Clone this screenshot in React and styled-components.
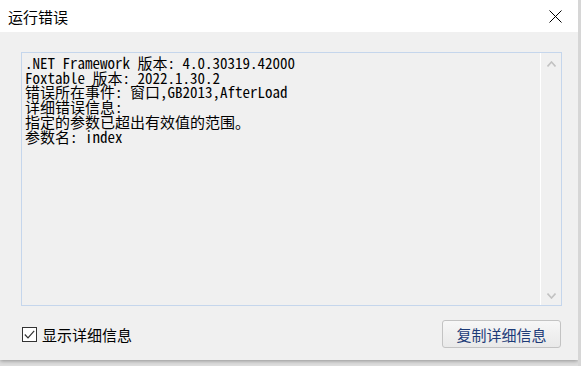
import React from "react";
import styled, { createGlobalStyle } from "styled-components";

const GlobalStyle = createGlobalStyle`
  html, body { margin: 0; padding: 0; background: #d9d9d9; overflow: hidden; }
  body { font-family: "Noto Sans CJK SC", "Noto Sans", sans-serif; }
`;

const Screen = styled.div`
  width: 581px;
  height: 366px;
  display: flex;
  align-items: flex-start;
  background: #dedede;
`;

const Dialog = styled.div`
  width: 578px;
  height: 360px;
  display: flex;
  flex-direction: column;
  background: #f0f0f0;
  box-shadow: 0 1px 4px rgba(0, 0, 0, 0.35);
  flex-shrink: 0;
`;

const TitleBar = styled.div`
  height: 32px;
  flex-shrink: 0;
  background: #ffffff;
  display: flex;
  align-items: center;
  justify-content: space-between;
  padding: 0 16px 0 8px;
`;

const Title = styled.div`
  font-size: 15px;
  color: #000;
  line-height: 1;
`;

const CloseIcon = styled.svg`
  width: 13px;
  height: 13px;
  display: block;
`;

const Body = styled.div`
  flex: 1;
  display: flex;
  flex-direction: column;
  padding: 20px 16px 0 21px;
`;

const TextBox = styled.div`
  height: 254px;
  box-sizing: border-box;
  border: 1px solid #c5d6ec;
  display: flex;
  background: #f0f0f0;
`;

const TextArea = styled.pre`
  flex: 1;
  margin: 0;
  padding: 3px 3px;
  font-family: "Noto Sans Mono CJK SC", "Noto Sans CJK SC", monospace;
  font-size: 15px;
  line-height: 14.7px;
  color: #000;
  white-space: pre;
  overflow: hidden;
`;

const ScrollBar = styled.div`
  width: 20px;
  border-left: 1px solid #ffffff;
  display: flex;
  flex-direction: column;
  justify-content: space-between;
  align-items: center;
  padding: 8px 0 6px;
`;

const Arrow = styled.svg`
  width: 9px;
  height: 6px;
  display: block;
`;

const Footer = styled.div`
  display: flex;
  align-items: center;
  justify-content: space-between;
  padding-top: 14px;
`;

const CheckLabel = styled.label`
  display: flex;
  align-items: center;
  gap: 5px;
  font-size: 15px;
  color: #000;
  margin-left: 1px;
`;

const Box = styled.span`
  width: 13px;
  height: 13px;
  border: 1px solid #333;
  background: #fff;
  display: flex;
  align-items: center;
  justify-content: center;
`;

const Button = styled.button`
  width: 119px;
  height: 28px;
  border: 1px solid #c3c3c3;
  border-radius: 3px;
  background: linear-gradient(#f7f7f7, #e9e9e9);
  font-family: "Noto Sans CJK SC", sans-serif;
  font-size: 15px;
  color: #1e3c78;
  padding: 0;
  margin-right: 1px;
  line-height: 1;
`;

const Backdrop = styled.div`
  flex: 1;
  height: 366px;
  background: #d6d6d6;
`;

const lines = [
  ".NET Framework 版本: 4.0.30319.42000",
  "Foxtable 版本: 2022.1.30.2",
  "错误所在事件: 窗口,GB2013,AfterLoad",
  "详细错误信息:",
  "指定的参数已超出有效值的范围。",
  "参数名: index",
].join("\n");

export default function App() {
  return (
    <>
      <GlobalStyle />
      <Screen>
        <Dialog>
          <TitleBar>
            <Title>运行错误</Title>
            <CloseIcon viewBox="0 0 13 13">
              <path d="M0.5 0.5 L12.5 12.5 M12.5 0.5 L0.5 12.5" stroke="#000" strokeWidth="1" fill="none" />
            </CloseIcon>
          </TitleBar>
          <Body>
            <TextBox>
              <TextArea>{lines}</TextArea>
              <ScrollBar>
                <Arrow viewBox="0 0 9 6">
                  <path d="M0.5 5.5 L4.5 1 L8.5 5.5" stroke="#c2c2c2" strokeWidth="1.6" fill="none" />
                </Arrow>
                <Arrow viewBox="0 0 9 6">
                  <path d="M0.5 0.5 L4.5 5 L8.5 0.5" stroke="#c2c2c2" strokeWidth="1.6" fill="none" />
                </Arrow>
              </ScrollBar>
            </TextBox>
            <Footer>
              <CheckLabel>
                <Box>
                  <svg width="11" height="9" viewBox="0 0 11 9">
                    <path d="M0.8 4.5 L4 7.8 L10.2 0.8" stroke="#333" strokeWidth="1.2" fill="none" />
                  </svg>
                </Box>
                显示详细信息
              </CheckLabel>
              <Button>复制详细信息</Button>
            </Footer>
          </Body>
        </Dialog>
        <Backdrop />
      </Screen>
    </>
  );
}
